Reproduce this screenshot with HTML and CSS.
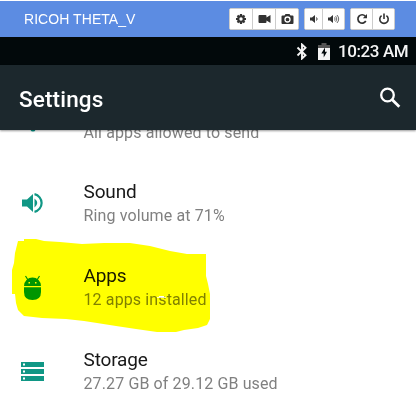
FILE: index.html
```html
<!DOCTYPE html>
<html lang="en">
<head>
<meta charset="utf-8">
<title>RICOH THETA_V</title>
<link rel="stylesheet" href="styles.css">
</head>
<body>
<header class="titlebar">
  <span class="device">RICOH THETA_V</span>
  <div class="group camera">
    <button><svg width="12" height="12" viewBox="0 0 12 12"><g stroke="#333" stroke-width="2.2"><path d="M6 1v10M1 6h10M2.500 2.500l7 7M9.500 2.500l-7 7"/></g><circle cx="6" cy="6" r="3.800" fill="#333"/><circle cx="6" cy="6" r="1.700" fill="#fff"/></svg></button>
    <button><svg width="13" height="10" viewBox="0 0 13 10"><path fill="#333" d="M1.500 1h6q1 0 1 1v1.600L12.500 1v8L8.500 6.400V8q0 1-1 1h-6q-1 0-1-1V2q0-1 1-1z"/></svg></button>
    <button><svg width="13" height="12" viewBox="0 0 13 12"><path fill="#333" d="M1.500 2.500h2L4.500 1h4l1 1.500h2q1 0 1 1V10q0 1-1 1h-10q-1 0-1-1V3.500q0-1 1-1z"/><circle cx="6.500" cy="6.500" r="2.500" fill="none" stroke="#fff" stroke-width="1.300"/></svg></button>
  </div>
  <div class="group volume">
    <button><svg width="10" height="10" viewBox="0 0 10 10"><path fill="#333" d="M1 3.500h2L6 1v8L3 6.500H1z"/><path fill="none" stroke="#333" d="M7.500 3.500q1.200 1.500 0 3"/></svg></button>
    <button><svg width="13" height="10" viewBox="0 0 13 10"><path fill="#333" d="M1 3.500h2L6 1v8L3 6.500H1z"/><path fill="none" stroke="#444" stroke-width=".8" d="M7.500 3.500q1.200 1.500 0 3M8.700 2.200q2.300 2.800 0 5.600M10 1q3.400 4 0 8"/></svg></button>
  </div>
  <div class="group power">
    <button><svg width="12" height="12" viewBox="0 0 12 12"><path fill="none" stroke="#333" stroke-width="1.700" d="M9.300 3.200A4.200 4.200 0 1 0 9.800 8"/><path fill="#333" d="M11 1v4.200H6.800z"/></svg></button>
    <button><svg width="12" height="12" viewBox="0 0 12 12"><path fill="none" stroke="#333" stroke-width="1.600" d="M3.600 2.700a4.200 4.200 0 1 0 4.800 0M6 .5v5.500"/></svg></button>
  </div>
</header>
<div class="statusbar">
  <svg width="12" height="17" viewBox="0 0 12 17"><path fill="none" stroke="#f4f4f4" stroke-width="1.900" d="M1.500 4.500l8 7.800L6 15.500v-14l3.500 3.200-8 7.800"/></svg>
  <svg class="battery" width="12" height="17" viewBox="0 0 12 17"><path fill="#555" d="M3.500 0h5v2H12v3H0V2h3.500z"/><path fill="#f4f4f4" d="M0 5h12v12H0z"/><path fill="#02090b" d="M7 4.500L3.300 10.500h2.400v4L9 8.700H7z"/></svg>
  <span class="clock">10:23 AM</span>
</div>
<div class="toolbar">
  <h1>Settings</h1>
  <svg width="22" height="22" viewBox="0 0 22 22"><circle cx="8.500" cy="8" r="6.300" fill="none" stroke="#fff" stroke-width="2.300"/><path stroke="#fff" stroke-width="2.800" d="M13 12.500l7.300 7.300"/></svg>
</div>
<main class="list">
  <section class="row first">
    <svg class="icon bell" width="26" height="26" viewBox="0 0 26 26"><path fill="#009688" d="M4 19l2-2v-6a7 7 0 0 1 14 0v6l2 2zM10.500 21h5a2.500 2.500 0 0 1-5 0z"/></svg>
    <div class="text"><p>All apps allowed to send</p></div>
  </section>
  <section class="row">
    <svg class="icon" width="26" height="26" viewBox="0 0 26 26"><path fill="#109785" d="M2 9.500h5L13 4v18l-6-5.500H2z"/><path fill="#109785" d="M14.500 8.500q5.500 4.500 0 9z"/><path fill="none" stroke="#109785" stroke-width="2.200" d="M14.500 4.200a9 9 0 0 1 0 17.600"/></svg>
    <div class="text"><h2>Sound</h2><p>Ring volume at 71%</p></div>
  </section>
  <section class="row apps">
    <svg class="icon" width="26" height="28" viewBox="0 0 26 28"><g fill="#009688"><path d="M4 13a8.500 8.500 0 0 1 17 0zM4 14.300h17V19q0 8-8.500 8T4 19z"/><path stroke="#009688" stroke-width="1.200" d="M8 7L5.500 3M17 7l2.500-4"/></g><path fill="#fff" d="M8.500 9H10v1.500H8.500zM15 9h1.500v1.500H15z"/></svg>
    <div class="text"><h2>Apps</h2><p>12 apps installed</p></div>
    <svg class="marker" width="200" height="96" viewBox="12 238 200 96"><path fill="#ff0" d="M18 241H24V239H36L44 241 60 242 82 244 104 243 130 243 150 246 170 251 187 254H206V276L208 284 210 294V319L207 325 198 328 184 330 176 332H157L136 329 116 326 97 323 84 321 66 319 42 318 24 316 18 310 16 303 15 294H12V270L14 263 15 253z"/></svg>
    <svg class="speck" width="9" height="3" viewBox="0 0 9 3"><path fill="#fff" d="M0 1h2V0h5v1h2v.8H0z"/></svg>
  </section>
  <section class="row">
    <svg class="icon" width="26" height="26" viewBox="0 0 26 26"><path fill="#109785" d="M1 4h23v5H1zM1 11h23v5H1zM1 18h23v5H1z"/><path fill="#fff" d="M3 5.500h2v2H3zM3 12.500h2v2H3zM3 19.500h2v2H3z"/></svg>
    <div class="text"><h2>Storage</h2><p>27.27 GB of 29.12 GB used</p></div>
  </section>
</main>
</body>
</html>
```

FILE: styles.css
```css
* { box-sizing: border-box; }
body {
  margin: 0;
  height: 410px;
  overflow: hidden;
  background: #fff;
  font-family: Roboto, sans-serif;
}
svg { display: block; flex: none; }
h1, h2, p { margin: 0; white-space: nowrap; }
.titlebar {
  display: flex;
  align-items: center;
  height: 37px;
  border-top: 1px solid #fff;
  padding: 0 21px 0 24px;
  background: #5c8ce2;
}
.device {
  flex: 1;
  color: #fff;
  font: 14px/20px "Liberation Sans", Arial, sans-serif;
  letter-spacing: .06px;
  white-space: nowrap;
}
.group {
  display: flex;
  height: 22px;
  border: 1px solid #ccc;
  border-radius: 2px;
  background: #fff;
  overflow: hidden;
}
.camera { width: 70px; }
.volume { width: 41px; margin-left: 5px; }
.power { width: 45px; margin-left: 5px; }
.group button {
  display: flex;
  flex: 1;
  align-items: center;
  justify-content: center;
  padding: 0;
  border: 0;
  background: #fff;
}
.group button + button { border-left: 1px solid #ccc; }
.volume button:first-child { flex: 0 0 17px; }
.statusbar {
  display: flex;
  align-items: center;
  height: 28px;
  padding-left: 296px;
  background: #02090b;
}
.battery { margin-left: 10px; }
.clock {
  margin-left: 8px;
  color: #f4f4f4;
  font-size: 17px;
  font-weight: 500;
  letter-spacing: -.4px;
  line-height: 28px;
  white-space: nowrap;
}
.toolbar {
  position: relative;
  z-index: 1;
  display: flex;
  align-items: center;
  justify-content: space-between;
  height: 65px;
  padding: 0 15px 0 19px;
  background: #1c282d;
  box-shadow: 0 1px 2px rgba(0, 0, 0, .4);
}
.toolbar h1 {
  color: #fff;
  font-size: 22.5px;
  font-weight: 500;
  letter-spacing: .15px;
  line-height: 30px;
  padding-top: 2px;
}
.list {
  height: 280px;
  overflow: hidden;
}
.row {
  position: relative;
  display: flex;
  align-items: center;
  height: 84px;
  padding-left: 20px;
}
.row.first {
  height: 31px;
  align-items: flex-start;
}
.bell { margin-top: -22px; }
.first .text { margin-top: -9px; }
.text { margin-left: 37.5px; }
.row h2 {
  color: #181818;
  font-size: 19px;
  font-weight: 400;
  letter-spacing: -.15px;
  line-height: 24px;
}
.row p {
  color: #808080;
  font-size: 16px;
  letter-spacing: .12px;
  line-height: 23px;
}
.marker {
  position: absolute;
  left: 12px;
  top: -7px;
  mix-blend-mode: multiply;
}
.speck {
  position: absolute;
  left: 157px;
  top: 51px;
}
```
